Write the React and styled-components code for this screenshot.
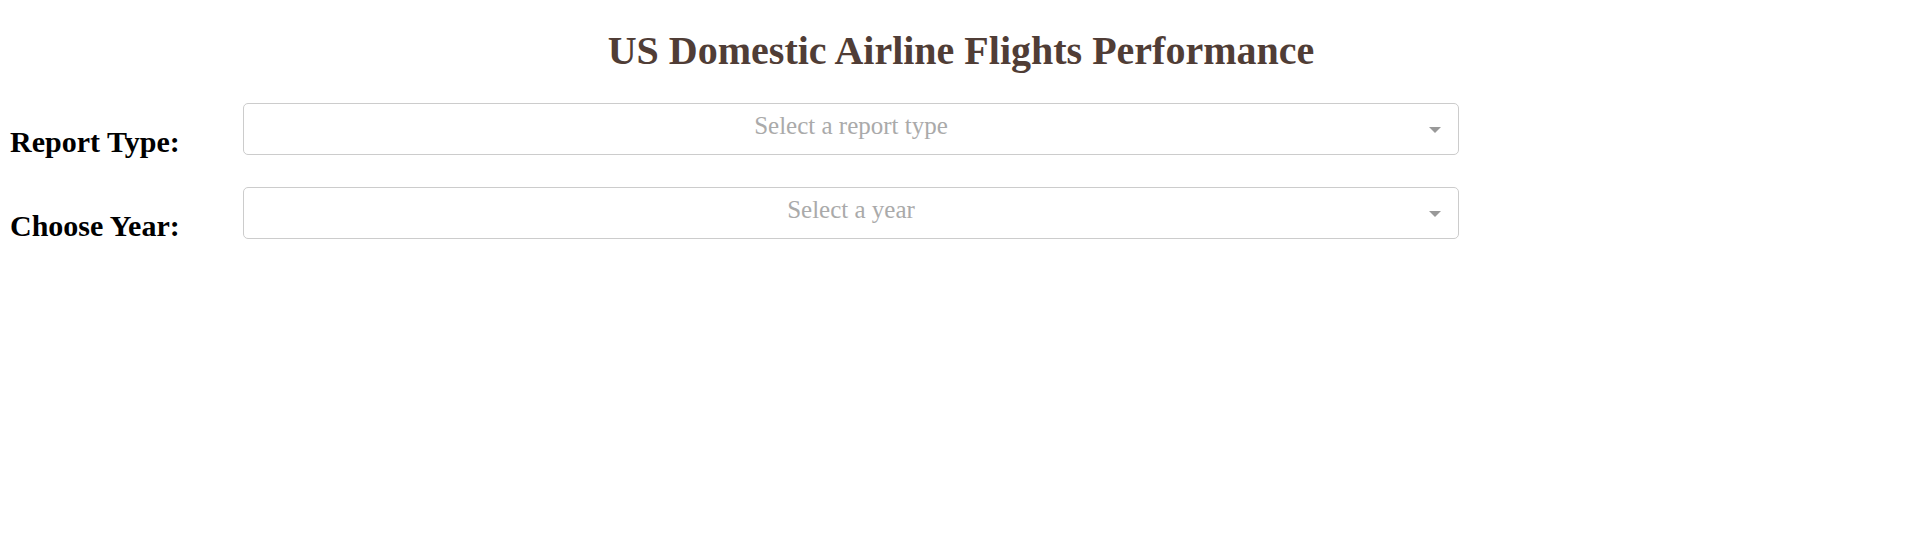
import React from "react";
import styled, { createGlobalStyle } from "styled-components";

const Global = createGlobalStyle`
  html, body { margin: 0; padding: 0; background: #ffffff; }
  body { font-family: "Liberation Serif", "Times New Roman", serif; }
`;

const Page = styled.div`
  padding: 0 10px;
`;

const Title = styled.h1`
  margin: 28px 0 0;
  padding-left: 10px;
  font-size: 40px;
  line-height: 46px;
  font-weight: 700;
  color: #503d36;
  text-align: center;
`;

const Form = styled.div`
  margin-top: 29px;
  display: flex;
  flex-direction: column;
  gap: 29px;
`;

const Row = styled.div`
  display: flex;
  align-items: flex-start;
`;

const Label = styled.h2`
  flex: 0 0 233px;
  margin: 22px 0 0;
  font-size: 30px;
  line-height: 33px;
  font-weight: 700;
  color: #000;
`;

const Control = styled.div`
  box-sizing: border-box;
  width: 1216px;
  height: 52px;
  border: 1px solid #cccccc;
  border-radius: 5px;
  background: #fff;
  display: grid;
  grid-template-columns: 1fr;
  cursor: default;
`;

const Placeholder = styled.span`
  grid-area: 1 / 1;
  font-size: 25px;
  line-height: 44px;
  color: #aaaaaa;
  text-align: center;
`;

const Arrow = styled.span`
  grid-area: 1 / 1;
  justify-self: end;
  align-self: center;
  margin-right: 17px;
  margin-top: 1px;
  width: 0;
  height: 0;
  border-style: solid;
  border-width: 6px 6px 0;
  border-color: #999 transparent transparent;
`;

function Dropdown({ placeholder }) {
  return (
    <Control>
      <Placeholder>{placeholder}</Placeholder>
      <Arrow />
    </Control>
  );
}

export default function App() {
  return (
    <Page>
      <Global />
      <Title>US Domestic Airline Flights Performance</Title>
      <Form>
        <Row>
          <Label>Report Type:</Label>
          <Dropdown placeholder="Select a report type" />
        </Row>
        <Row>
          <Label>Choose Year:</Label>
          <Dropdown placeholder="Select a year" />
        </Row>
      </Form>
    </Page>
  );
}
